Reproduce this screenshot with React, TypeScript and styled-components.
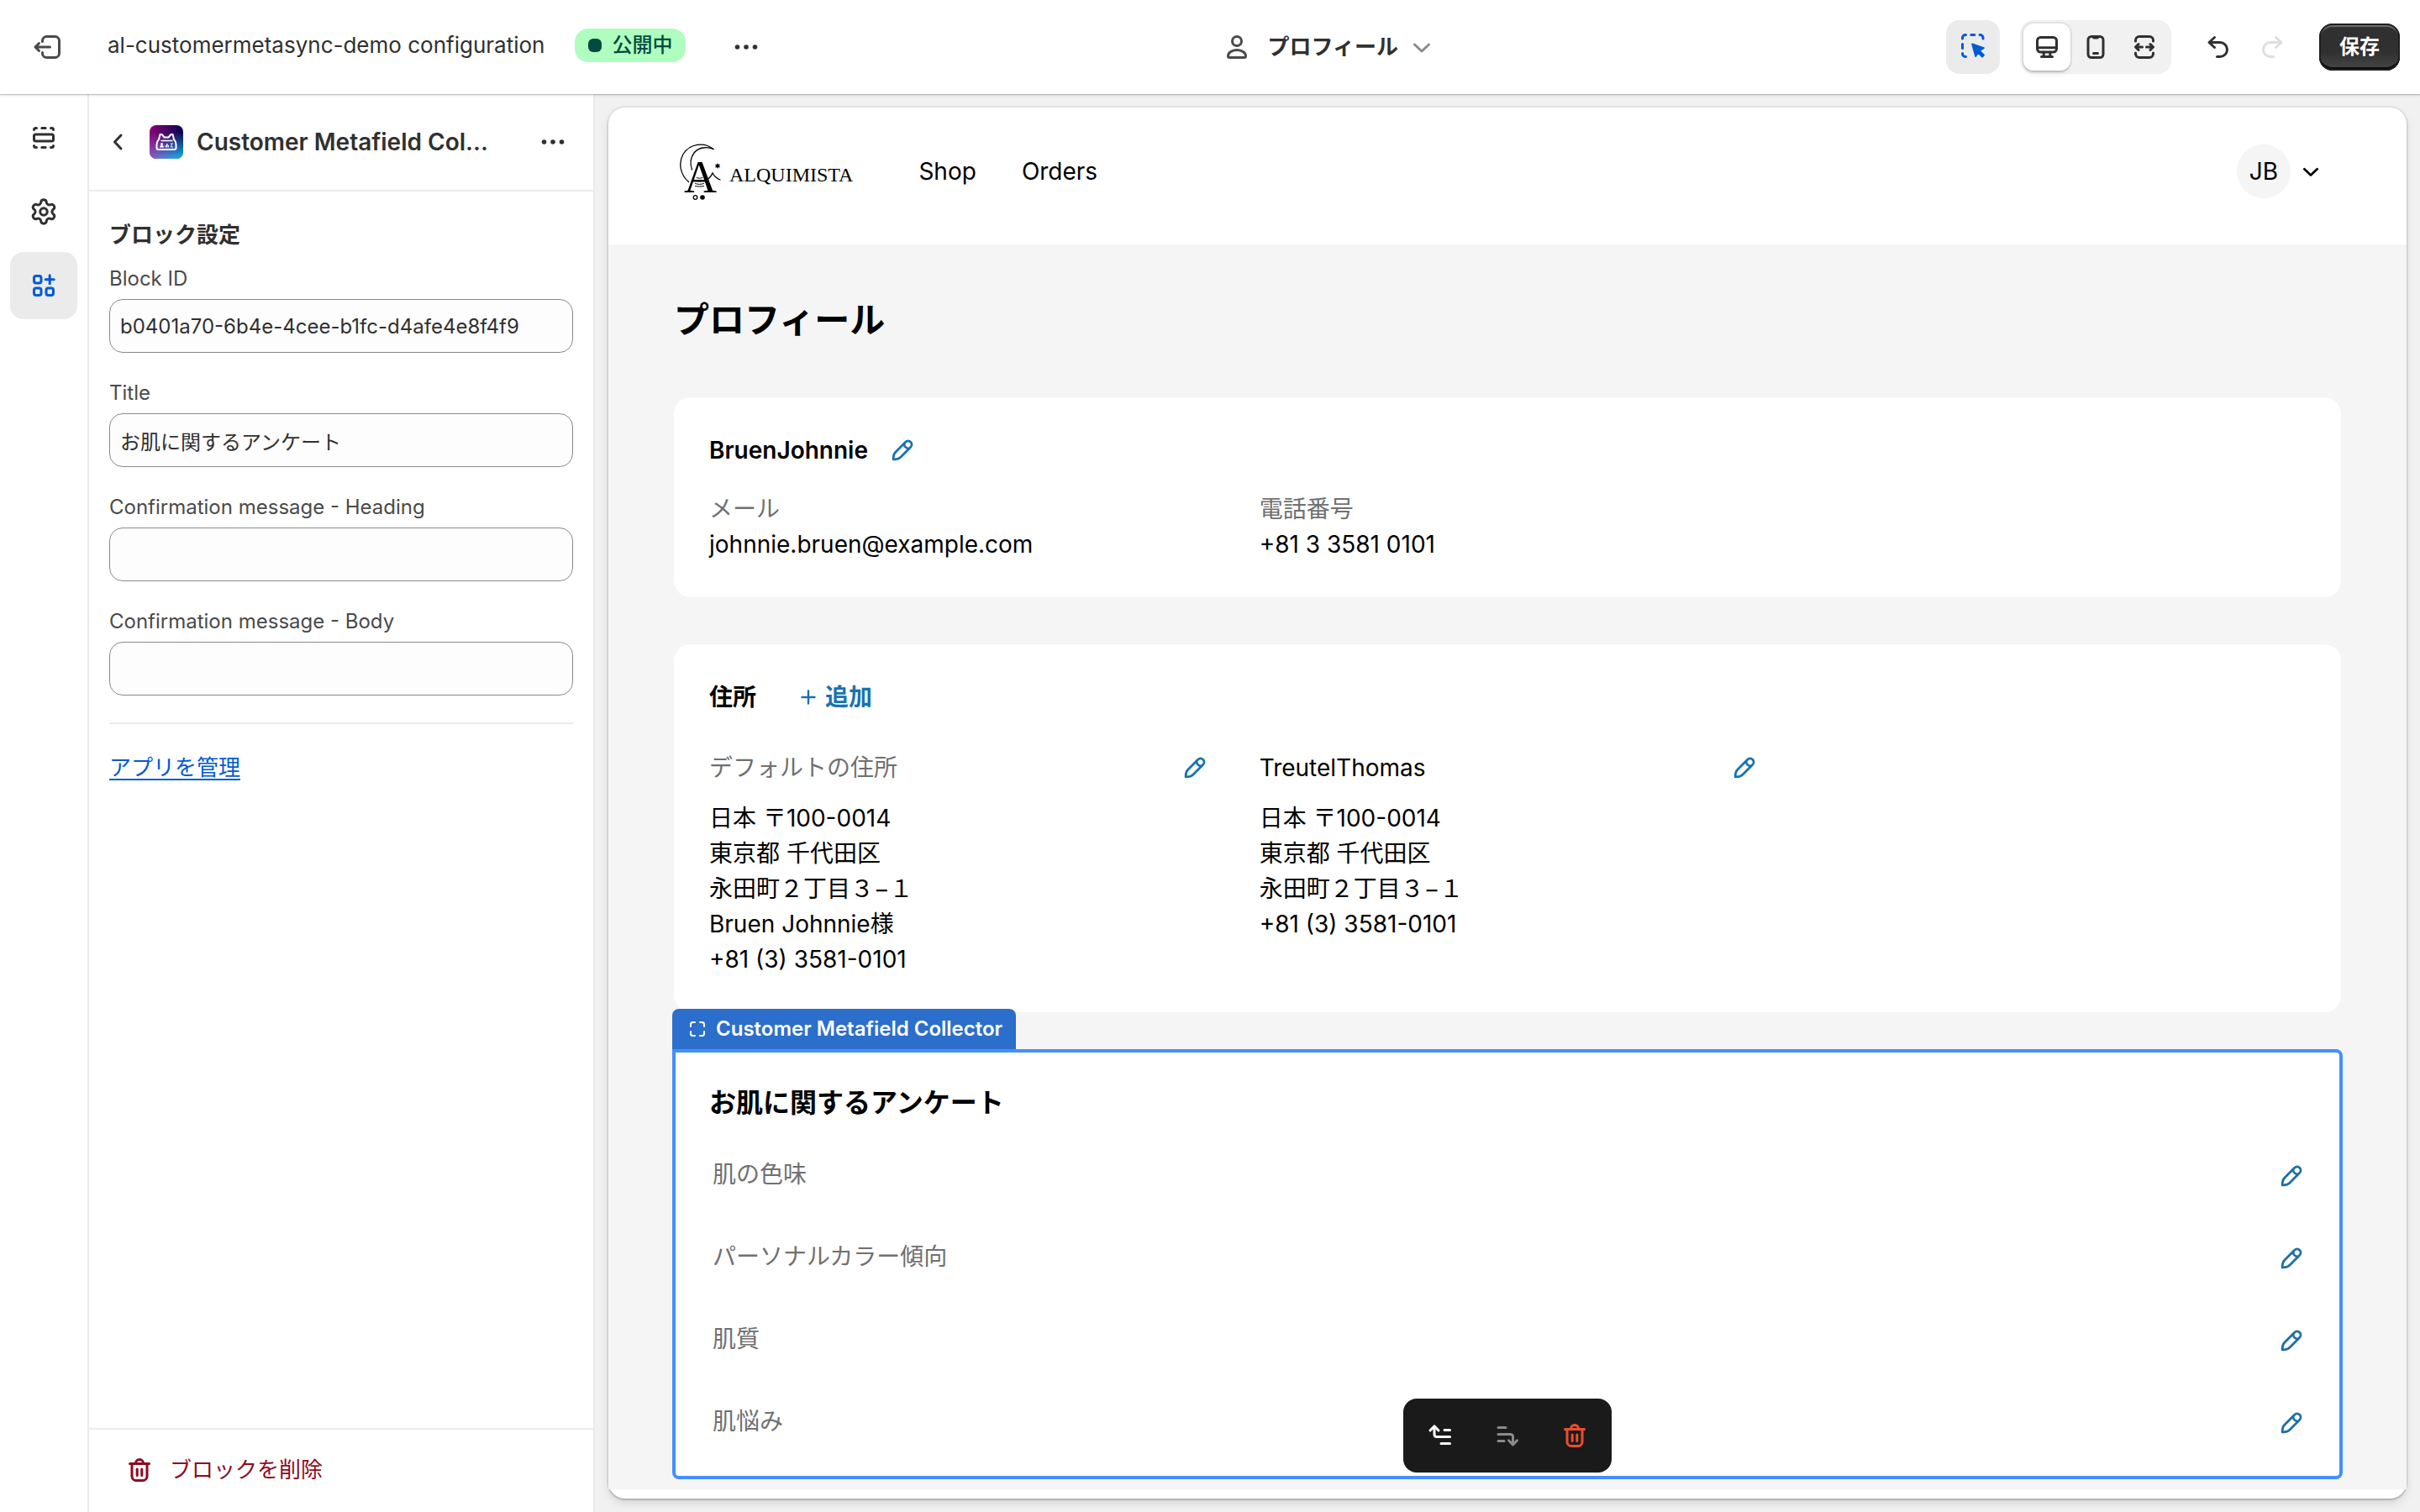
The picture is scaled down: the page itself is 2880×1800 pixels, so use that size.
import React from 'react';
import styled, { createGlobalStyle } from 'styled-components';
import { Settings } from 'lucide-react';

const latin = '"Inter", "Noto Sans CJK JP", sans-serif';

const GlobalStyle = createGlobalStyle`
  *, *::before, *::after { box-sizing: border-box; }
  body {
    margin: 0;
    background: #f1f1f1;
    color: #303030;
    font-family: ${latin};
    font-size: 24px;
    line-height: 40px;
    -webkit-font-smoothing: antialiased;
  }
  h1, h2, h3, p, dl, dt, dd, address { margin: 0; font-style: normal; }
  button, input { font: inherit; color: inherit; }
  button { padding: 0; border: 0; background: none; cursor: pointer; }
  svg { display: block; flex: none; }
`;

/* ---------- icons ---------- */

const Icon = ({ children, size = 40 }: { children: React.ReactNode; size?: number }) => (
  <svg width={size} height={size} viewBox="0 0 20 20" fill="none" stroke="currentColor"
    strokeWidth="1.5" strokeLinecap="round" strokeLinejoin="round" aria-hidden="true">
    {children}
  </svg>
);

const ExitIcon = () => (
  <Icon>
    <path d="M7.25 6.75v-.5a2.5 2.5 0 0 1 2.5-2.5h5a2.5 2.5 0 0 1 2.5 2.5v7.5a2.5 2.5 0 0 1-2.5 2.5h-5a2.5 2.5 0 0 1-2.5-2.5v-.5" />
    <path d="M11.75 10H3M5.25 7.75 3 10l2.25 2.25" />
  </Icon>
);
const DotsIcon = () => (
  <Icon>
    <g fill="currentColor" stroke="none">
      <circle cx="4.75" cy="10" r="1.4" /><circle cx="10" cy="10" r="1.4" /><circle cx="15.25" cy="10" r="1.4" />
    </g>
  </Icon>
);
const PersonIcon = () => (
  <Icon>
    <circle cx="10" cy="6.5" r="2.75" />
    <path d="M4.75 15.4c0-1.9 2.1-3.65 5.25-3.65s5.25 1.75 5.25 3.65c0 .5-.3.85-.8.85h-8.9c-.5 0-.8-.35-.8-.85Z" />
  </Icon>
);
const ChevronDownIcon = ({ size }: { size?: number }) => <Icon size={size}><path d="M5.75 8.5 10 12.5l4.25-4" /></Icon>;
const ChevronLeftIcon = () => <Icon><path d="M12 6 8.25 10 12 14" /></Icon>;
const SelectIcon = () => (
  <Icon>
    <path d="M3.75 5v-.5c0-1 .75-1.75 1.75-1.75h.25M8.9 2.75h2M14 2.75h.25c1 0 1.75.75 1.75 1.75V5M3.75 8.25v2.5M3.75 13.75v.25c0 1 .75 1.75 1.75 1.75h.25" />
    <path fill="currentColor" strokeWidth="1" d="m9.6 8.2 6.8 2.4-2.5 1.6 2.6 2.6-1 1-2.6-2.6-1.3 2.3Z" />
  </Icon>
);
const DesktopIcon = () => (
  <Icon>
    <rect x="4.25" y="4.25" width="11.5" height="8.75" rx="2" />
    <path d="M4.25 10.4h11.5M8.1 13v2.5M11.9 13v2.5M6.75 15.75h6.5" />
  </Icon>
);
const MobileIcon = () => (
  <Icon>
    <rect x="5.5" y="3.75" width="9" height="12.5" rx="2" />
    <path d="M8.5 4.1c.1.3.3.4.6.4h1.8c.3 0 .5-.1.6-.4M8.75 13.75h2.5" />
  </Icon>
);
const ExpandIcon = () => (
  <Icon>
    <path d="M4.75 6.5V6c0-1.25 1-2.25 2.25-2.25h6c1.25 0 2.25 1 2.25 2.25v.5M4.75 13.5v.5c0 1.25 1 2.25 2.25 2.25h6c1.25 0 2.25-1 2.25-2.25v-.5" />
    <path d="M8.75 10h-4M6.5 8.25 4.75 10l1.75 1.75M11.25 10h4M13.5 8.25 15.25 10l-1.75 1.75" />
  </Icon>
);
const UndoIcon = () => (
  <Icon>
    <path d="M7.75 4.25 4.5 7.25l3.25 3M4.75 7.25H11a4.25 4.25 0 0 1 0 8.5H9.25" />
  </Icon>
);
const RedoIcon = () => (
  <Icon>
    <path d="m12.25 4.25 3.25 3-3.25 3M15.25 7.25H9a4.25 4.25 0 0 0 0 8.5h1.75" />
  </Icon>
);
const SectionsIcon = () => (
  <Icon>
    <rect x="4.25" y="8" width="11.5" height="4" rx="1" />
    <path d="M4.25 5.25c0-.55.45-1 1-1h.5M8.9 4.25h2.2M14.25 4.25h.5c.55 0 1 .45 1 1M4.25 14.75c0 .55.45 1 1 1h.5M8.9 15.75h2.2M14.25 15.75h.5c.55 0 1-.45 1-1" />
  </Icon>
);
const AppsIcon = () => (
  <Icon>
    <rect x="4.25" y="4.25" width="4.25" height="4.25" rx="1.25" />
    <rect x="4.25" y="11.5" width="4.25" height="4.25" rx="1.25" />
    <rect x="11.5" y="11.5" width="4.25" height="4.25" rx="1.25" />
    <path d="M13.6 3.9v5M11.1 6.4h5" />
  </Icon>
);
const TrashIcon = () => (
  <Icon>
    <path d="M4.25 6.25h11.5M7.75 6a2.25 2.25 0 0 1 4.5 0M5.5 6.5v7.25a2.5 2.5 0 0 0 2.5 2.5h4a2.5 2.5 0 0 0 2.5-2.5V6.5M8.6 9.5v3.75M11.4 9.5v3.75" />
  </Icon>
);
const MoveUpIcon = () => (
  <Icon>
    <path d="M4 7l2.5-2.6L9 7M6.5 4.75v4.5c0 .9.6 1.5 1.5 1.5h7.75M12.5 6.75h3.25M10.5 14.75h5.25" />
  </Icon>
);
const MoveDownIcon = () => (
  <Icon>
    <path d="M4.5 5.25H9M4.5 9.25h7.25c.9 0 1.5.6 1.5 1.5v4.5M10.75 12.9l2.5 2.6 2.5-2.6M4.5 13.25H8" />
  </Icon>
);
const PencilIcon = () => (
  <svg width="26" height="26" viewBox="0 0 24 24" fill="none" stroke="currentColor" strokeWidth="2.6"
    strokeLinecap="round" strokeLinejoin="round" aria-hidden="true">
    <path d="M15.400 3 4.400 14c-1.700 1.700-2.600 4-2.400 8 4 .2 6.300-.7 8-2.400L21 8.600A3.950 3.950 0 0 0 15.400 3Z" />
    <path d="M13.800 4.900c.1 2.900 2.400 5.200 5.300 5.400" />
  </svg>
);
const PlusIcon = () => (
  <svg width="20" height="20" viewBox="0 0 20 20" stroke="currentColor" strokeWidth="2.4" strokeLinecap="round" aria-hidden="true">
    <path d="M10 2.500v15M2.500 10h15" />
  </svg>
);
const FrameIcon = () => (
  <svg width="20" height="20" viewBox="0 0 20 20" fill="none" stroke="currentColor" strokeWidth="2" strokeLinecap="round" aria-hidden="true">
    <path d="M2 7V4.500A2.500 2.500 0 0 1 4.500 2H7M13 2h2.500A2.500 2.500 0 0 1 18 4.500V7M18 13v2.500a2.500 2.500 0 0 1-2.500 2.500H13M7 18H4.500A2.500 2.500 0 0 1 2 15.500V13" />
  </svg>
);
const AppLogo = () => (
  <svg width="40" height="40" viewBox="0 0 40 40" aria-hidden="true">
    <defs>
      <linearGradient id="appTop" x1="0" x2="1" y1="0" y2="0">
        <stop offset="0" stopColor="#8e0078" /><stop offset="1" stopColor="#05044f" />
      </linearGradient>
      <linearGradient id="appBottom" x1="0" x2="1" y1="0" y2="0">
        <stop offset="0" stopColor="#8a5cc0" /><stop offset="1" stopColor="#0cb8ea" />
      </linearGradient>
      <linearGradient id="appFade" x1="0" x2="0" y1="0" y2="1">
        <stop offset="0.2" stopColor="#000" /><stop offset="1" stopColor="#fff" />
      </linearGradient>
      <mask id="appMask"><rect width="40" height="40" fill="url(#appFade)" /></mask>
    </defs>
    <rect width="40" height="40" rx="8" fill="url(#appTop)" />
    <rect width="40" height="40" rx="8" fill="url(#appBottom)" mask="url(#appMask)" />
    <g fill="none" stroke="#fff" strokeLinejoin="round" strokeLinecap="round">
      <path strokeWidth="2" d="M12.500 11h2l3 3.500h5l3-3.500h2l1.500 6c1.500 1.500 2.500 3.500 2.500 6v4c0 1.500-.5 2-2 2h-19c-1.500 0-2-.5-2-2v-4c0-2.500 1-4.500 2.500-6z" />
      <path strokeWidth="1.500" d="M14 18.500h13" />
    </g>
    <g fill="#fff">
      <circle cx="14.500" cy="22.500" r="1.500" /><path d="M12 26.500a2.500 2.500 0 0 1 5 0Z" />
      <path d="M18.500 24h1v2.500h-1zM20 22h1.500v4.500H20zM22 24h1v2.500h-1zM25 21.500h3v1h-3zM25 23.500h2v1h-2zM25 25.500h3v1h-3z" />
    </g>
  </svg>
);
const AlquimistaMark = () => (
  <svg width="52" height="80" viewBox="0 -6 52 80" aria-hidden="true">
    <g fill="none" stroke="#000" strokeWidth="1.300" strokeLinecap="round">
      <path d="M41 7.500C30-1.500 13 1 5 13.500-1 24 1.500 38 11.500 46.500" />
      <path d="M41 7.500C33 4 23 5.500 18 12c-4.500 6-5 13-2.500 20" />
      <path d="M34 43.500c2.500-1.500 4.500-4 6-7.500 2 4 5 6.500 9 8" />
      <path d="M21 41.500c2 1 5 1 7 0M20 45c2.500 1.200 6 1.200 9 0M19.500 48.500c3 1.200 7 1.200 10 0M19.500 51.500c3 .8 7 .8 10 0" strokeWidth="1" />
      <circle cx="19.500" cy="65" r="2.300" />
    </g>
    <circle cx="28" cy="65" r="2.800" />
    <path d="m46 24 1 2 2-.5-1 2 1 2-2-.5-1 2-1-2-2 .5 1-2-1-2 2 .5z" />
    <text x="6" y="59" fontFamily='"Liberation Serif", serif' fontSize="54">A</text>
  </svg>
);

/* ---------- frame ---------- */

const Page = styled.div`
  display: flex;
  flex-direction: column;
  min-height: 100vh;
`;
const TopBar = styled.header`
  position: relative;
  z-index: 1;
  display: flex;
  align-items: center;
  height: 112px;
  padding: 0 24px 0 36px;
  background: #fff;
  box-shadow: 0 1px 1px rgba(0, 0, 0, 0.2), 0 2px 4px rgba(0, 0, 0, 0.08);
`;
const TopLeft = styled.div`
  display: flex;
  align-items: center;
`;
const TopCenter = styled.div`
  display: flex;
  flex: 1;
  justify-content: center;
  padding-right: 60px;
`;
const TopRight = styled.div`
  display: flex;
  align-items: center;
  gap: 24px;
`;
const DocGroup = styled.div`
  display: flex;
  align-items: center;
  gap: 36px;
  margin: 0 52px;
  padding-bottom: 4px;
`;
const DocName = styled.h1`
  font-size: 26px;
  font-weight: 400;
  line-height: 40px;
`;
const Badge = styled.span`
  display: flex;
  align-items: center;
  gap: 12px;
  height: 40px;
  padding: 0 16px;
  border-radius: 16px;
  background: #affebf;
  color: #014b40;
  font-weight: 500;

  &::before {
    content: "";
    width: 16px;
    height: 16px;
    border-radius: 6px;
    background: currentColor;
  }
`;
const BareButton = styled.button<{ $tone?: string }>`
  display: flex;
  align-items: center;
  justify-content: center;
  min-width: 40px;
  min-height: 40px;
  color: ${(p) => p.$tone ?? '#303030'};
`;
const PageSwitch = styled.button`
  display: flex;
  align-items: center;
  gap: 16px;
  color: #303030;
  font-size: 26px;
  font-weight: 600;

  & > svg:first-child { color: #4a4a4a; }
  & > svg:last-child { color: #8a8a8a; margin-left: -8px; }
`;
const InspectButton = styled.button`
  display: flex;
  align-items: center;
  justify-content: center;
  width: 64px;
  height: 64px;
  border-radius: 16px;
  background: #ebebeb;
  color: #005bd3;
`;
const DeviceGroup = styled.div`
  display: flex;
  gap: 2px;
  padding: 4px;
  border-radius: 16px;
  background: #f1f1f1;
`;
const DeviceButton = styled.button<{ $active?: boolean }>`
  display: flex;
  align-items: center;
  justify-content: center;
  width: 56px;
  height: 56px;
  border-radius: 12px;
  background: ${(p) => (p.$active ? '#fff' : 'transparent')};
  box-shadow: ${(p) => (p.$active ? '0 0 0 2px rgba(0,0,0,.06), 0 2px 2px rgba(0,0,0,.12), 0 8px 8px -4px rgba(0,0,0,.06)' : 'none')};
`;
const History = styled.div`
  display: flex;
  gap: 8px;
  padding: 0 4px;
`;
const HistoryButton = styled(DeviceButton)`
  &:disabled { color: #dedede; cursor: default; }
`;
const SaveButton = styled.button`
  width: 96px;
  height: 56px;
  border-radius: 16px;
  background: linear-gradient(#303030 60%, #474747);
  box-shadow: inset 0 0 0 2px #1f1f1f, inset 0 4px 1px rgba(255, 255, 255, 0.3), inset 0 -4px 0 #0c0c0c;
  color: #fff;
  font-weight: 600;
`;
const Workspace = styled.div`
  display: flex;
  flex: 1;
`;
const Rail = styled.nav`
  display: flex;
  flex-direction: column;
  flex: none;
  gap: 8px;
  width: 106px;
  padding: 12px;
  border-right: 2px solid #ebebeb;
  background: #fff;
`;
const RailButton = styled.button<{ $active?: boolean }>`
  display: flex;
  align-items: center;
  justify-content: center;
  width: 80px;
  height: 80px;
  border-radius: 16px;
  background: ${(p) => (p.$active ? '#ebebeb' : 'transparent')};
  color: ${(p) => (p.$active ? '#005bd3' : '#303030')};
`;

/* ---------- settings panel ---------- */

const Panel = styled.aside`
  display: flex;
  flex-direction: column;
  flex: none;
  width: 602px;
  border-right: 2px solid #ebebeb;
  background: #fff;
`;
const PanelHead = styled.div`
  display: flex;
  align-items: center;
  height: 116px;
  padding: 0 28px 0 14px;
  border-bottom: 2px solid #ebebeb;
`;
const PanelTitle = styled.h2`
  flex: 1;
  margin: 0 16px;
  font-size: 28px;
  font-weight: 600;
  line-height: 40px;
  white-space: nowrap;
`;
const LogoSlot = styled.span`
  margin-left: 18px;
`;
const PanelBody = styled.form`
  display: flex;
  flex: 1;
  flex-direction: column;
  padding: 32px 24px;
`;
const SectionTitle = styled.h3`
  margin-bottom: 12px;
  font-size: 26px;
  font-weight: 600;
  line-height: 40px;
`;
const Field = styled.div`
  display: flex;
  flex-direction: column;
  gap: 4px;
  margin-bottom: 28px;
`;
const FieldLabel = styled.label`
  color: #4a4a4a;
  line-height: 40px;
`;
const TextBox = styled.input`
  width: 100%;
  height: 64px;
  padding: 0 12px;
  border: 1px solid #8a8a8a;
  border-radius: 16px;
  outline: none;
  background: #fdfdfd;
`;
const Rule = styled.hr`
  width: 100%;
  height: 2px;
  margin: 4px 0 32px;
  border: 0;
  background: #ebebeb;
`;
const ManageLink = styled.a`
  align-self: flex-start;
  color: #005bd3;
  font-size: 26px;
  text-underline-offset: 4px;
`;
const PanelFoot = styled.div`
  height: 100px;
  padding: 28px 40px;
  border-top: 2px solid #ebebeb;
`;
const DeleteButton = styled.button`
  display: flex;
  align-items: center;
  gap: 16px;
  color: #8e0b21;
  font-size: 26px;
`;

/* ---------- storefront preview ---------- */

const PreviewArea = styled.main`
  flex: 1;
  display: flex;
  min-width: 0;
  padding: 16px;
`;
const Preview = styled.div`
  position: relative;
  display: flex;
  flex: 1;
  flex-direction: column;
  padding-bottom: 11px;
  border-radius: 20px;
  background: #fff;
  box-shadow: 0 0 0 2px rgba(0, 0, 0, 0.06), 0 2px 2px rgba(0, 0, 0, 0.16), 0 6px 12px rgba(0, 0, 0, 0.1);
  color: #000;
  font-size: 28px;
  line-height: 42px;
`;
const StoreHead = styled.div`
  display: flex;
  align-items: center;
  height: 163px;
  padding: 0 96px 11px 84px;
`;
const Brand = styled.a`
  display: flex;
  align-items: center;
  gap: 8px;
  margin-right: 78px;
  color: #000;
  font-family: "Liberation Serif", serif;
  font-size: 24px;
  text-decoration: none;
`;
const BrandName = styled.span`
  padding-top: 8px;
`;
const StoreNav = styled.nav`
  display: flex;
  flex: 1;
  gap: 54px;
`;
const StoreLink = styled.a`
  color: #000;
  text-decoration: none;
`;
const Account = styled.button`
  display: flex;
  align-items: center;
  gap: 6px;
`;
const Avatar = styled.span`
  display: grid;
  place-items: center;
  width: 64px;
  height: 64px;
  border-radius: 50%;
  background: #f5f5f5;
`;
const StoreBody = styled.div`
  display: flex;
  flex: 1;
  flex-direction: column;
  padding: 62px 78px 12px;
  background: #f5f5f5;
`;
const StoreTitle = styled.h1`
  margin-bottom: 64px;
  font-size: 42px;
  font-weight: 700;
  line-height: 56px;
`;
const Card = styled.section`
  margin-bottom: 56px;
  padding: 42px;
  border-radius: 20px;
  background: #fff;
`;
const CardHead = styled.div<{ $gap: number }>`
  display: flex;
  align-items: center;
  margin-bottom: ${(p) => p.$gap}px;
`;
const CardTitle = styled.h2`
  font-size: 28px;
  font-weight: 600;
  line-height: 42px;
`;
const EditButton = styled.button<{ $tone?: string }>`
  display: grid;
  place-items: center;
  color: ${(p) => p.$tone ?? '#1773b0'};
`;
const NameEdit = styled(EditButton)`
  margin-left: 28px;
`;
const AddButton = styled.button`
  display: flex;
  align-items: center;
  gap: 10px;
  margin-left: 52px;
  color: #1773b0;
  font-weight: 600;
`;
const Columns = styled.div`
  display: grid;
  grid-template-columns: repeat(3, 1fr);
  gap: 64px;
`;
const Muted = styled.dt`
  color: #707070;
`;
const AddressHead = styled.div<{ $muted?: boolean }>`
  display: flex;
  align-items: center;
  justify-content: space-between;
  margin-bottom: 18px;
  color: ${(p) => (p.$muted ? '#707070' : '#000')};
`;
const AddressLine = styled.span`
  display: block;
`;
const Selected = styled.section`
  position: relative;
  margin: -12px -2px 0;
  padding: 40px 40px 44px;
  border: 4px solid #458fff;
  border-radius: 0 8px 8px 8px;
  background: #fff;
`;
const BlockTag = styled.div`
  position: absolute;
  bottom: calc(100% + 4px);
  left: -4px;
  display: flex;
  align-items: center;
  gap: 12px;
  height: 48px;
  padding: 0 16px 0 20px;
  border-radius: 8px 8px 0 0;
  background: #2c6ecb;
  color: #fff;
  font-size: 24px;
  font-weight: 600;
  white-space: nowrap;
`;
const SurveyTitle = styled.h2`
  margin-bottom: 44px;
  font-size: 32px;
  font-weight: 700;
  line-height: 40px;
`;
const SurveyList = styled.ul`
  display: flex;
  flex-direction: column;
  gap: 56px;
  margin: 0;
  padding: 0 4px;
  list-style: none;
`;
const SurveyRow = styled.li`
  display: flex;
  align-items: center;
  justify-content: space-between;
  color: #707070;

  & > button { padding-top: 4px; }
`;
const FloatingBar = styled.div`
  position: absolute;
  bottom: 31px;
  left: 50%;
  display: flex;
  gap: 16px;
  padding: 12px;
  border-radius: 16px;
  background: #1a1a1a;
  transform: translateX(-50%);
`;
const FloatingButton = styled.button<{ $tone: string }>`
  display: grid;
  place-items: center;
  width: 64px;
  height: 64px;
  color: ${(p) => p.$tone};
`;

const fields = [
  { id: 'block-id', label: 'Block ID', value: 'b0401a70-6b4e-4cee-b1fc-d4afe4e8f4f9' },
  { id: 'title', label: 'Title', value: 'お肌に関するアンケート' },
  { id: 'confirm-heading', label: 'Confirmation message - Heading', value: '' },
  { id: 'confirm-body', label: 'Confirmation message - Body', value: '' },
];

const addresses = [
  {
    name: 'デフォルトの住所',
    muted: true,
    lines: ['日本 〒100-0014', '東京都 千代田区', '永田町２丁目３−１', 'Bruen Johnnie様', '+81 (3) 3581-0101'],
  },
  {
    name: 'TreutelThomas',
    muted: false,
    lines: ['日本 〒100-0014', '東京都 千代田区', '永田町２丁目３−１', '+81 (3) 3581-0101'],
  },
];

const questions = ['肌の色味', 'パーソナルカラー傾向', '肌質', '肌悩み'];

export default function App() {
  return (
    <Page lang="ja">
      <GlobalStyle />
      <TopBar>
        <TopLeft>
          <BareButton aria-label="終了" $tone="#4a4a4a"><ExitIcon /></BareButton>
          <DocGroup>
            <DocName>al-customermetasync-demo configuration</DocName>
            <Badge>公開中</Badge>
          </DocGroup>
          <BareButton aria-label="その他の操作"><DotsIcon /></BareButton>
        </TopLeft>
        <TopCenter>
          <PageSwitch><PersonIcon />プロフィール<ChevronDownIcon /></PageSwitch>
        </TopCenter>
        <TopRight>
          <InspectButton aria-label="インスペクター"><SelectIcon /></InspectButton>
          <DeviceGroup>
            <DeviceButton $active aria-label="デスクトップ"><DesktopIcon /></DeviceButton>
            <DeviceButton aria-label="モバイル"><MobileIcon /></DeviceButton>
            <DeviceButton aria-label="全画面"><ExpandIcon /></DeviceButton>
          </DeviceGroup>
          <History>
            <HistoryButton aria-label="元に戻す"><UndoIcon /></HistoryButton>
            <HistoryButton aria-label="やり直す" disabled><RedoIcon /></HistoryButton>
          </History>
          <SaveButton>保存</SaveButton>
        </TopRight>
      </TopBar>
      <Workspace>
        <Rail>
          <RailButton aria-label="セクション"><SectionsIcon /></RailButton>
          <RailButton aria-label="設定"><Settings size={34} strokeWidth={2.1} /></RailButton>
          <RailButton aria-label="アプリ" $active><AppsIcon /></RailButton>
        </Rail>
        <Panel>
          <PanelHead>
            <BareButton aria-label="戻る"><ChevronLeftIcon /></BareButton>
            <LogoSlot><AppLogo /></LogoSlot>
            <PanelTitle>Customer Metafield Col...</PanelTitle>
            <BareButton aria-label="ブロックの操作"><DotsIcon /></BareButton>
          </PanelHead>
          <PanelBody>
            <SectionTitle>ブロック設定</SectionTitle>
            {fields.map((f) => (
              <Field key={f.id}>
                <FieldLabel htmlFor={f.id}>{f.label}</FieldLabel>
                <TextBox id={f.id} type="text" defaultValue={f.value} />
              </Field>
            ))}
            <Rule />
            <ManageLink href="#manage">アプリを管理</ManageLink>
          </PanelBody>
          <PanelFoot>
            <DeleteButton><TrashIcon />ブロックを削除</DeleteButton>
          </PanelFoot>
        </Panel>
        <PreviewArea>
          <Preview>
            <StoreHead>
              <Brand href="#home"><AlquimistaMark /><BrandName>ALQUIMISTA</BrandName></Brand>
              <StoreNav>
                <StoreLink href="#shop">Shop</StoreLink>
                <StoreLink href="#orders">Orders</StoreLink>
              </StoreNav>
              <Account><Avatar>JB</Avatar><ChevronDownIcon size={36} /></Account>
            </StoreHead>
            <StoreBody>
              <StoreTitle>プロフィール</StoreTitle>
              <Card>
                <CardHead $gap={28}>
                  <CardTitle>BruenJohnnie</CardTitle>
                  <NameEdit aria-label="名前を編集"><PencilIcon /></NameEdit>
                </CardHead>
                <Columns as="dl">
                  <div>
                    <Muted>メール</Muted>
                    <dd>johnnie.bruen@example.com</dd>
                  </div>
                  <div>
                    <Muted>電話番号</Muted>
                    <dd>+81 3 3581 0101</dd>
                  </div>
                </Columns>
              </Card>
              <Card>
                <CardHead $gap={42}>
                  <CardTitle>住所</CardTitle>
                  <AddButton><PlusIcon />追加</AddButton>
                </CardHead>
                <Columns>
                  {addresses.map((a) => (
                    <address key={a.name}>
                      <AddressHead $muted={a.muted}>
                        {a.name}
                        <EditButton aria-label="住所を編集"><PencilIcon /></EditButton>
                      </AddressHead>
                      {a.lines.map((line) => <AddressLine key={line}>{line}</AddressLine>)}
                    </address>
                  ))}
                </Columns>
              </Card>
              <Selected>
                <BlockTag><FrameIcon />Customer Metafield Collector</BlockTag>
                <SurveyTitle>お肌に関するアンケート</SurveyTitle>
                <SurveyList>
                  {questions.map((q) => (
                    <SurveyRow key={q}>
                      {q}
                      <EditButton $tone="#1f6fa3" aria-label={`${q}を編集`}><PencilIcon /></EditButton>
                    </SurveyRow>
                  ))}
                </SurveyList>
              </Selected>
            </StoreBody>
            <FloatingBar>
              <FloatingButton $tone="#fff" aria-label="上に移動"><MoveUpIcon /></FloatingButton>
              <FloatingButton $tone="#8a8a8a" aria-label="下に移動" disabled><MoveDownIcon /></FloatingButton>
              <FloatingButton $tone="#ef4d2f" aria-label="削除"><TrashIcon /></FloatingButton>
            </FloatingBar>
          </Preview>
        </PreviewArea>
      </Workspace>
    </Page>
  );
}
